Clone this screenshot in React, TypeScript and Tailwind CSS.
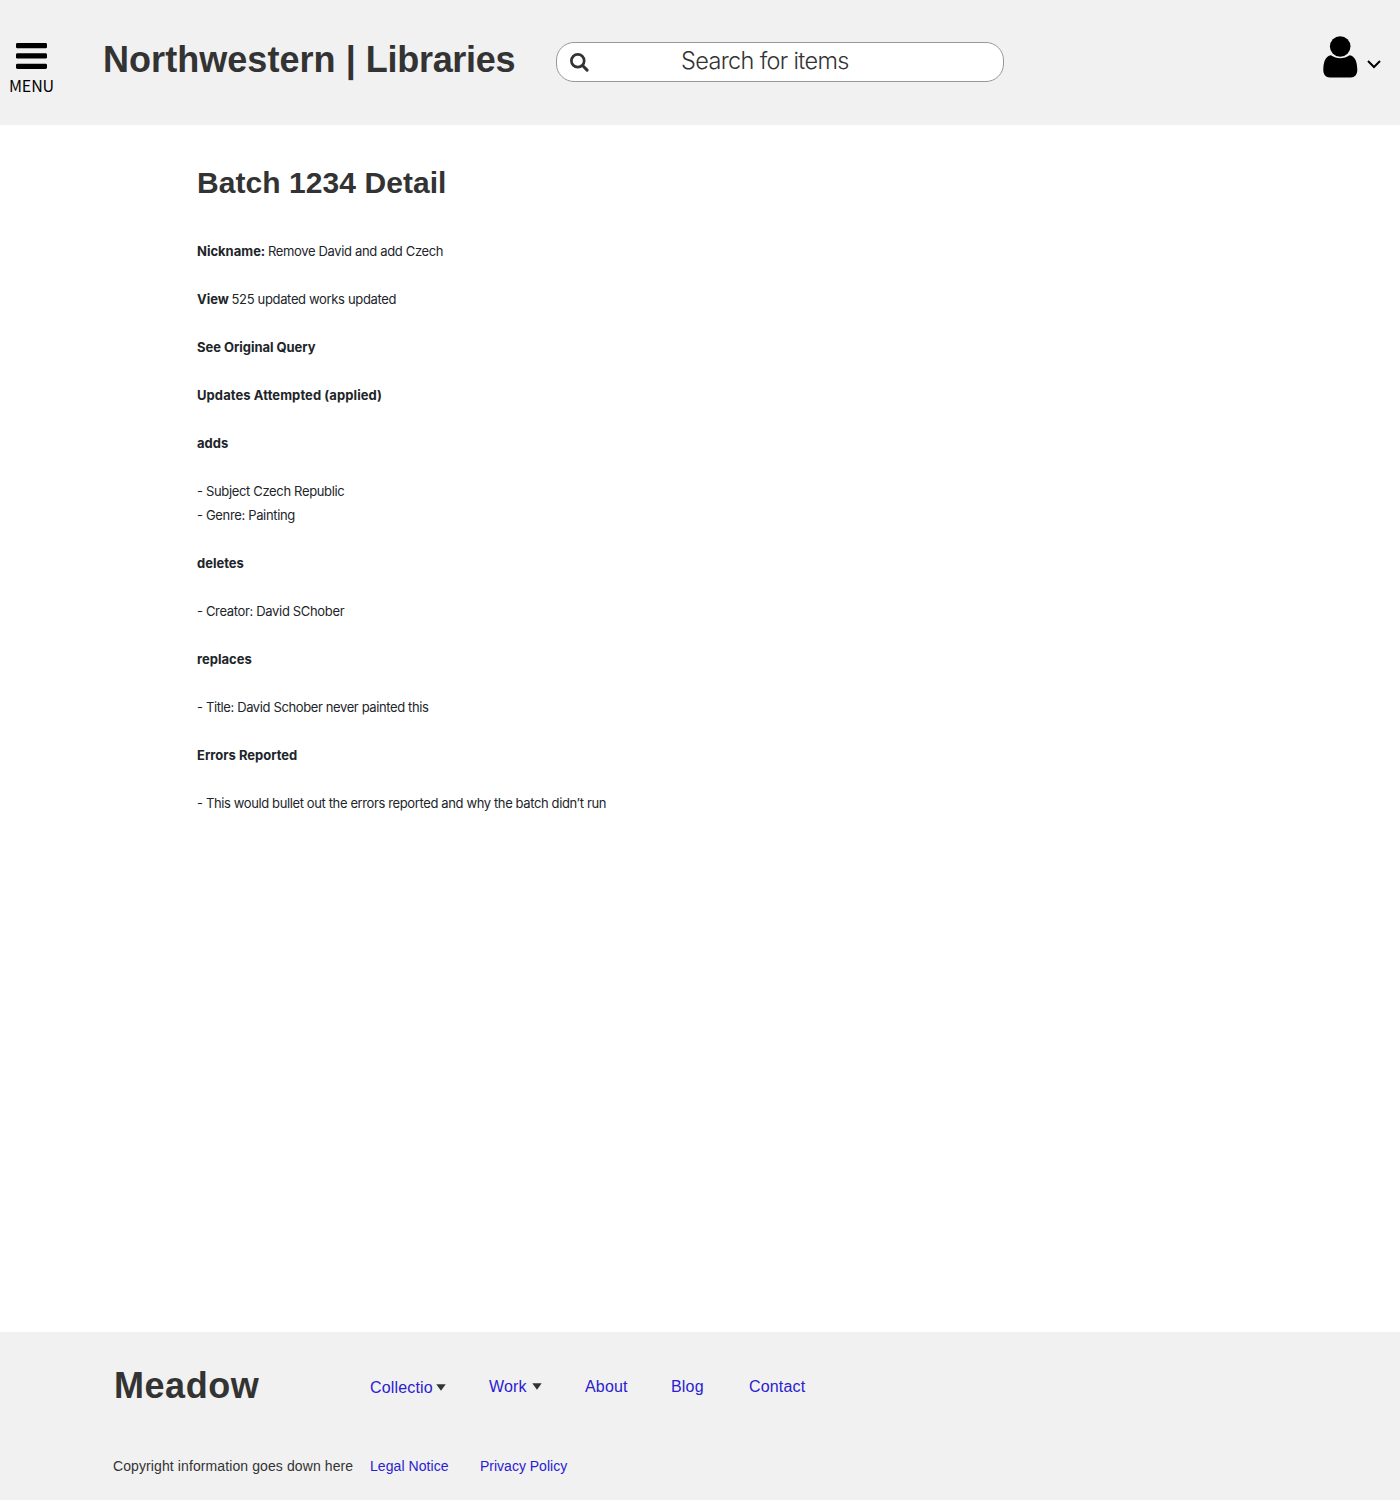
import React from "react";

type Line = { bold?: string; text?: string; className?: string };

const lines: Line[] = [
  { bold: "Nickname:", text: "Remove David and add Czech" },
  { bold: "View", text: "525 updated works updated" },
  { bold: "See Original Query", className: "tracking-[-0.04px]" },
  { bold: "Updates Attempted (applied)", className: "tracking-[0.08px]" },
  { bold: "adds" },
  { text: "- Subject Czech Republic" },
  { text: "- Genre: Painting", className: "-mt-[24px]" },
  { bold: "deletes" },
  { text: "- Creator: David SChober" },
  { bold: "replaces" },
  { text: "- Title: David Schober never painted this" },
  { bold: "Errors Reported" },
  { text: "- This would bullet out the errors reported and why the batch didn’t run" },
];

function Caret() {
  return (
    <svg width="10" height="7" viewBox="0 0 10 7" className="shrink-0" fill="#333">
      <path d="M0.3 0.3h9.4L5 6.7z" />
    </svg>
  );
}

export default function App() {
  return (
    <div className="flex h-[1500px] w-[1400px] flex-col bg-white font-['Liberation_Sans',Arial,sans-serif] text-[#333]">
      <header className="flex h-[125px] shrink-0 items-start bg-[#f1f1f1]">
        <button className="mt-[43px] ml-[9px] flex w-[45px] flex-col items-center text-black">
          <svg width="31" height="26" viewBox="0 0 31 26" fill="#000">
            <rect width="31" height="5.3" rx="1.4" />
            <rect y="10.3" width="31" height="5.3" rx="1.4" />
            <rect y="20.7" width="31" height="5.3" rx="1.4" />
          </svg>
          <span className="mt-[5px] font-['Noto_Sans_CJK_SC',sans-serif] text-[16px] leading-[22px] tracking-[-0.15px]">MENU</span>
        </button>
        <h1 className="mt-[38px] ml-[48px] w-[454px] pl-px text-[36px] leading-[44px] font-bold whitespace-nowrap">
          <span className="tracking-[0.05px]">Northwestern | </span>
          <span className="tracking-[-0.3px]">Libraries</span>
        </h1>
        <div className="mt-[42px] flex h-[40px] w-[448px] items-center rounded-[18px] border border-[#979797] bg-white">
          <svg width="20" height="20" viewBox="0 0 20 20" className="mt-px ml-[13px]" fill="none" stroke="#333">
            <circle cx="7.8" cy="7.8" r="6.4" strokeWidth="2.7" />
            <path d="M12.8 12.8l4.3 4.3" strokeWidth="3" strokeLinecap="round" />
          </svg>
          <span className="-mt-[2px] ml-[91px] font-[Inter,sans-serif] text-[23.5px] font-light tracking-[-0.66px] whitespace-nowrap">Search for items</span>
        </div>
        <button className="mt-[36px] ml-auto flex items-start pr-[19px]">
          <svg width="35" height="42" viewBox="0 0 35 42" fill="#000">
            <circle cx="17.2" cy="10.5" r="10.3" />
            <path d="M8 19.2C2 20 .3 27 .3 34c0 4.500 2.500 7.500 6.500 7.500h21c4 0 6.500-3 6.500-7.500 0-7-1.700-14-7.700-14.800-2.800 2-6 3-9.300 3s-6.500-1-9.300-3z" />
          </svg>
          <svg width="14" height="9" viewBox="0 0 14 9" className="mt-[24px] ml-[9px]" fill="none" stroke="#000" strokeWidth="2">
            <path d="M1 1l6 6 6-6" />
          </svg>
        </button>
      </header>

      <main className="grow pl-[197px]">
        <h2 className="pt-[38px] text-[30px] leading-[40px] font-bold tracking-[0.06px]">Batch 1234 Detail</h2>
        <div className="mt-[36px] flex flex-col gap-[24px] font-[Inter,sans-serif] text-[13px] leading-[24px] text-[#212529]">
          {lines.map((line, i) => (
            <p key={i} className={line.className}>
              {line.bold && <span className="font-bold">{line.bold}</span>}
              {line.bold && line.text && <span className="tracking-[-1px]"> </span>}
              {line.text && (
                <span className={line.text.length > 30 ? "tracking-[-0.38px]" : "tracking-[-0.34px]"}>{line.text}</span>
              )}
            </p>
          ))}
        </div>
      </main>

      <footer className="h-[168px] shrink-0 bg-[#f1f1f1] pt-[32px] pl-[113px]">
        <div className="flex h-[44px] items-center text-[16px] leading-[20px] tracking-[0.17px] text-[#2a20d0]">
          <strong className="w-[257px] pl-px text-[36px] leading-[44px] tracking-[0.55px] text-[#333]">Meadow</strong>
          <a className="mt-[3px] flex w-[119px] items-center gap-[3px]">
            Collectio
            <Caret />
          </a>
          <a className="mt-px flex w-[96px] items-center gap-[5px]">
            Work
            <Caret />
          </a>
          <a className="mt-px w-[86px]">About</a>
          <a className="mt-px w-[78px]">Blog</a>
          <a className="mt-px">Contact</a>
        </div>
        <div className="mt-[48px] flex text-[14px] leading-[20px] text-[#2a20d0]">
          <span className="w-[257px] tracking-[0.1px] text-[#333]">Copyright information goes down here</span>
          <a className="w-[110px] tracking-[0.06px]">Legal Notice</a>
          <a>Privacy Policy</a>
        </div>
      </footer>
    </div>
  );
}
